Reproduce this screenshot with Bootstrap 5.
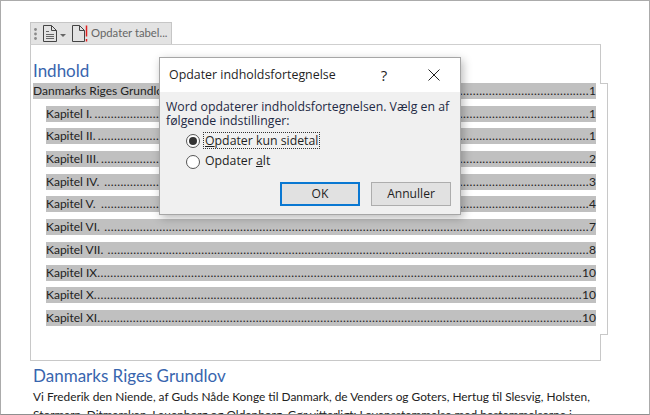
<!DOCTYPE html>
<html lang="da"><head><meta charset="utf-8">
<link href="https://cdn.jsdelivr.net/npm/bootstrap@5.3.0/dist/css/bootstrap.min.css" rel="stylesheet">
<style>
html,body{margin:0;background:#fff;overflow:hidden}
.shot{width:650px;height:415px;border:1px solid #ababab;border-bottom-color:#8f8f8f;padding:21px 0 0 29px;overflow:hidden;position:relative;font-family:Lato,"Liberation Sans",sans-serif;color:#262626;box-sizing:border-box;background:#fff}
.tbar{width:142px;height:22px;background:#e3e3e3;border:1px solid #c6c6c6;border-bottom:0;padding-left:3px;color:#666;font-size:11.3px;white-space:nowrap;position:relative}
.ic-doc{margin-left:6px}
.ic-arrow{margin-left:3px}
.ic-doc2{margin-left:5px}
.tbar-label{margin-left:3px}
.frame{width:571px;height:317px;border:1px solid #c8c8c8;border-top-color:#cfcfcf;position:relative;padding:14px 4px 0 2px}
.frame::after{content:"";position:absolute;left:569px;top:38px;width:8px;height:252px;border:1px solid #c8c8c8;border-left:0;background:#fff}
.h-blue{color:#3865ae;font-size:17px;line-height:24px;font-weight:400}
.tocrows{display:flex;flex-direction:column;gap:6.7px;font-size:12px;line-height:16px;position:relative;z-index:1}
.tocline{height:16px;background:#c0c0c0;display:flex;white-space:pre;color:#222}
.tocline.sub{margin-left:13px}
.tocline .dots{flex:1;min-width:0;text-align:right;letter-spacing:.4px}
.below{padding:3px 0 0 3px;width:590px}
.below p{margin:0;font-size:11.880px;line-height:17.500px;white-space:nowrap;color:#222}
.dlg{position:absolute;left:158px;top:56px;width:302px;height:158px;background:#f0f0f0;border:1px solid #a6a6a6;box-shadow:2px 3px 9px rgba(0,0,0,.28);z-index:5;font-family:"Open Sans","Noto Sans",sans-serif;color:#1f1f1f;font-size:12.3px}
.dlg-head{height:34px;background:#fff;padding:0 0 0 9px;font-size:12.400px}
.dlg-q{width:16px;margin-left:auto;text-align:center;font-size:15px}
.dlg-x{margin:0 20px 0 36px;display:block}
.dlg-body{padding:8px 6px 0;line-height:14px;color:#1f2a44}
.opt{gap:3px;margin-left:26px;color:#1f1f1f;height:21px}
.opt-first{margin-top:2px}
.opt-plain{margin-left:2px}
.dot-r{width:14px;height:14px;border-radius:50%;border:1px solid #555;background:#fff;display:flex;align-items:center;justify-content:center;flex:none}
.dot-r.on::after{content:"";width:8px;height:8px;border-radius:50%;background:#333}
.foc{border:1px dotted #333;padding:0 1px;line-height:15px}
.dlg-acts{gap:11px;padding-right:9px;margin-top:10px}
.dlg-btn{width:80px;height:24px;font-size:12.100px;line-height:20px;padding:0;border-radius:0;border:1px solid #adadad;background:#e1e1e1;color:#1f1f1f;font-family:inherit}
.dlg-btn.def{border:2px solid #0a78d2;line-height:18px}
</style></head><body>
<div class="shot">
  <div class="tbar d-flex align-items-center">
    <svg width="3" height="12" viewBox="0 0 3 12"><g fill="#8a8a8a"><circle cx="1.500" cy="1.500" r="1.400"/><circle cx="1.500" cy="6" r="1.400"/><circle cx="1.500" cy="10.500" r="1.400"/></g></svg>
    <svg class="ic-doc" width="14" height="17" viewBox="0 0 14 17" fill="none" stroke="#444"><path d="M.5.500h8l5 5v11h-13zM8.500.500v5h5"/><path d="M3 6.500h3M3 9.500h8M3 11.500h8M3 13.500h8" stroke="#666"/></svg>
    <svg class="ic-arrow" width="7" height="16" viewBox="0 0 7 16"><path d="M0 8h6l-3 3z" fill="#666"/></svg>
    <svg class="ic-doc2" width="16" height="17" viewBox="0 0 16 17" fill="none"><path d="M.5.500h7l5 5v11H.5zM7.500.500v5h5" stroke="#444"/><path d="M14.500 .5v11" stroke="#e02020" stroke-width="1.500"/><path d="M14.500 14v2.500" stroke="#e02020" stroke-width="1.500"/></svg>
    <span class="tbar-label">Opdater tabel...</span>
  </div>
  <div class="frame">
    <div class="h-blue">Indhold</div>
    <div class="tocrows">
      <div class="tocline"><span>Danmarks Riges Grundlov</span><span class="dots"></span><span>1</span></div>
      <div class="tocline sub"><span>Kapitel I.</span><span class="dots"></span><span>1</span></div>
      <div class="tocline sub"><span>Kapitel II.</span><span class="dots"></span><span>1</span></div>
      <div class="tocline sub"><span>Kapitel III.</span><span class="dots"></span><span>2</span></div>
      <div class="tocline sub"><span>Kapitel IV. </span><span class="dots"></span><span>3</span></div>
      <div class="tocline sub"><span>Kapitel V. </span><span class="dots"></span><span>4</span></div>
      <div class="tocline sub"><span>Kapitel VI. </span><span class="dots"></span><span>7</span></div>
      <div class="tocline sub"><span>Kapitel VII. </span><span class="dots"></span><span>8</span></div>
      <div class="tocline sub"><span>Kapitel IX.</span><span class="dots"></span><span>10</span></div>
      <div class="tocline sub"><span>Kapitel X.</span><span class="dots"></span><span>10</span></div>
      <div class="tocline sub"><span>Kapitel XI.</span><span class="dots"></span><span>10</span></div>
    </div>
  </div>
  <div class="below">
    <div class="h-blue">Danmarks Riges Grundlov</div>
    <p>Vi Frederik den Niende, af Guds Nåde Konge til Danmark, de Venders og Goters, Hertug til Slesvig, Holsten,</p>
    <p>Stormarn, Ditmarsken, Lauenborg og Oldenborg, Gør vitterligt: Lovensstemmelse med bestemmelserne i</p>
  </div>
  <div class="dlg" role="dialog">
    <div class="dlg-head d-flex align-items-center">
      <span>Opdater indholdsfortegnelse</span>
      <span class="dlg-q">?</span>
      <svg class="dlg-x" width="12" height="12" viewBox="0 0 12 12"><path d="M.5.500l11 11M11.500.500l-11 11" stroke="#222" fill="none"/></svg>
    </div>
    <div class="dlg-body">Word opdaterer indholdsfortegnelsen. Vælg en af<br>følgende indstillinger:</div>
    <div class="opt opt-first d-flex align-items-center"><span class="dot-r on"></span><span class="foc"><u>O</u>pdater kun sidetal</span></div>
    <div class="opt d-flex align-items-center"><span class="dot-r"></span><span class="opt-plain">Opdater <u>a</u>lt</span></div>
    <div class="dlg-acts d-flex justify-content-end">
      <button class="btn dlg-btn def" type="button">OK</button>
      <button class="btn dlg-btn" type="button">Annuller</button>
    </div>
  </div>
</div>
<script src="https://cdn.jsdelivr.net/npm/bootstrap@5.3.0/dist/js/bootstrap.bundle.min.js"></script>
<script>
document.querySelectorAll('.dots').forEach(function(d){
  var box=d.clientWidth||d.getBoundingClientRect().width, probe=document.createElement('span');
  probe.textContent='..........';d.appendChild(probe);
  var w=probe.getBoundingClientRect().width/10;d.removeChild(probe);
  d.textContent='.'.repeat(Math.floor(box/w));
});
</script>
</body></html>
